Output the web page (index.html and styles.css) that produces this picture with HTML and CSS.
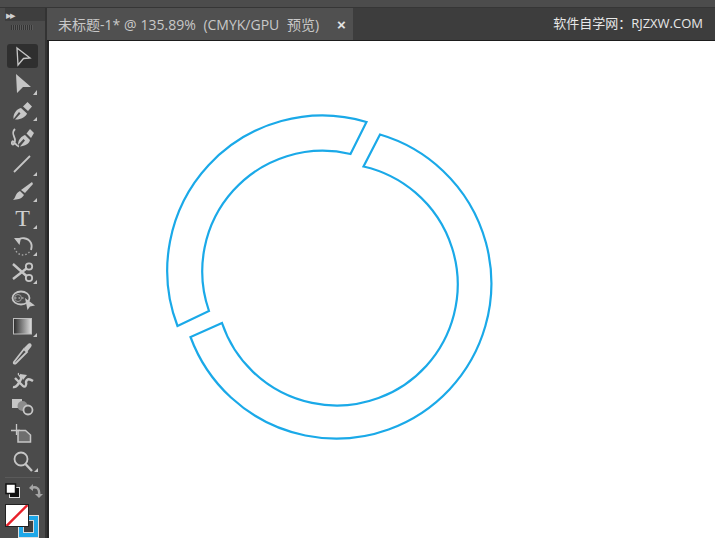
FILE: index.html
```html
<!DOCTYPE html>
<html lang="zh">
<head>
  <meta charset="UTF-8" />
  <title>未标题-1</title>
  <link rel="stylesheet" href="styles.css">
</head>
<body>
  <div class="top-strip"></div>
  <div class="workspace">

    <div class="toolbar">
      <div class="toolbar-head"><span class="collapse">▸▸</span></div>
      <div class="grip"></div>

      <div class="tool active">
        <svg viewBox="0 0 45 27"><path class="line" d="M17 5 L30 15 L23.500 15.500 L18 22 Z"/></svg>
      </div>
      <div class="tool">
        <svg viewBox="0 0 45 27"><path class="solid" d="M16 4 L31 17 L23 17 L17 23 Z"/><path class="solid" d="M37 20 V25 H33 Z"/></svg>
      </div>
      <div class="tool">
        <svg viewBox="0 0 45 27"><path class="solid" d="M13.500 22 C13 16 17 12 21 11 L27 16.500 C26 20 20 23 15 22.500 L20.500 16.500 L19 15 Z"/><path class="solid" d="M23 9.500 L27.500 5 L32 9.500 L28 14 Z"/><path class="solid" d="M37 20 V24 H33 Z"/></svg>
      </div>
      <div class="tool">
        <svg viewBox="0 0 45 27"><path class="solid" d="M18 21 C18 15 22 12 25 11 L30 16 C29 20 25 22 20 22.500 L25 16.500 L23.500 15 Z"/><path class="solid" d="M26.500 9.500 L30 5 L34 9 L31 14 Z"/><path class="line wide" d="M15 5 C10 10 16 13 15 17 C14 22 11 21 12 18 C13 15 16 22 19 22.500"/></svg>
      </div>
      <div class="tool">
        <svg viewBox="0 0 45 27"><path class="line wide" d="M14 21 L30 5"/><path class="solid" d="M37 21 V25 H33 Z"/></svg>
      </div>
      <div class="tool">
        <svg viewBox="0 0 45 27"><path class="solid" d="M32 4 L33 6 L25 15 L21 12 Z"/><path class="solid" d="M20 13 L24 17 C21 22 17 21 13 22 C16 20 15 15 20 13 Z"/><path class="solid" d="M37 20 V24 H33 Z"/></svg>
      </div>
      <div class="tool">
        <svg viewBox="0 0 45 27"><text class="type-glyph" x="22.500" y="21" text-anchor="middle">T</text><path class="solid" d="M37 20 V24 H33 Z"/></svg>
      </div>
      <div class="tool">
        <svg viewBox="0 0 45 27"><path class="line wide" d="M17 9 C20 5 28 5 31 11 C32 13 32 15 31 18"/><path class="solid" d="M14 6 L21 6 L19.500 13 Z"/><path class="dots" d="M14.500 16 C16 21 20 23 23 23 C26 23 29 21 30 19"/><path class="solid" d="M37 20 V24 H33 Z"/></svg>
      </div>
      <div class="tool">
        <svg viewBox="0 0 45 27"><circle class="line wide" cx="29" cy="7.500" r="3.200"/><circle class="line wide" cx="29" cy="19" r="3.200"/><path class="line thick" d="M13 5 L26.500 17 M13 20 L26.500 9.500"/><path class="solid" d="M37 21 V25 H33 Z"/></svg>
      </div>
      <div class="tool">
        <svg viewBox="0 0 45 27"><ellipse class="line wide" cx="21" cy="12" rx="8.500" ry="6.500"/><circle class="line thin" cx="18" cy="12" r="3.500"/><path class="dots" d="M15 12 H25"/><path class="solid" d="M25 12 L35 19.500 L30 20.500 L27.500 24 Z"/></svg>
      </div>
      <div class="tool">
        <svg viewBox="0 0 45 27">
          <defs><linearGradient id="grad"><stop offset="0" stop-color="#2b2b2b"/><stop offset="1" stop-color="#dedede"/></linearGradient></defs>
          <rect x="13.500" y="5.500" width="18" height="15.500" fill="url(#grad)" stroke="#bdbdbd"/>
          <path class="solid" d="M37 20 V24 H33 Z"/>
        </svg>
      </div>
      <div class="tool">
        <svg viewBox="0 0 45 27"><path class="line wide" d="M14 22 C13 24 15 24 16 23 L27 12 L24 9 Z"/><path class="solid" d="M24 8 L28 4 C30 2 33 5 31 7 L27 12 Z"/></svg>
      </div>
      <div class="tool">
        <svg viewBox="0 0 45 27"><path class="line thick" d="M13 20 C17 21 19 16 21 12 C22 9 18 7 19 7 M15 11 L23 19 C25 21 27 18 26 15 C27 11 30 12 33 14"/><path class="solid" d="M20 7 L27 8 L23 13 Z"/></svg>
      </div>
      <div class="tool">
        <svg viewBox="0 0 45 27"><rect class="solid" x="12" y="5" width="10" height="9"/><circle class="mid" cx="22.500" cy="12" r="5"/><circle class="ring" cx="28" cy="16" r="4.500"/></svg>
      </div>
      <div class="tool">
        <svg viewBox="0 0 45 27"><path class="line" d="M11 9.500 H20 M16.500 3 V14"/><path class="filled-doc" d="M18 9.500 H25.500 L30.500 14 V21 H18 Z"/></svg>
      </div>
      <div class="tool">
        <svg viewBox="0 0 45 27"><circle class="line wide" cx="21" cy="11" r="6.500"/><path class="line thick" d="M25.500 16 L32 23"/><path class="solid" d="M38 20 V24 H34 Z"/></svg>
      </div>

      <div class="divider"></div>

      <div class="color-row">
        <svg viewBox="0 0 45 20">
          <rect x="9.500" y="6.500" width="10" height="10" fill="#111" stroke="#ddd"/>
          <rect x="6" y="3" width="9.500" height="9.500" fill="#fff" stroke="#111" stroke-width="1.500"/>
          <path class="swap" d="M31 7 C36 5 40 7 39 14"/>
          <path class="swap-head" d="M29 7 L33 3 V10 Z M35 13 H43 L39 17 Z"/>
        </svg>
      </div>

      <div class="swatches">
        <div class="swatch-stroke"><div class="swatch-hole"></div></div>
        <div class="swatch-fill">
          <svg viewBox="0 0 22 22"><path d="M0 22 L22 0" stroke="#e8202a" stroke-width="2.500"/></svg>
        </div>
      </div>
    </div>

    <div class="gutter"></div>

    <div class="main">
      <div class="tab-bar">
        <div class="tab">
          <span class="tab-title">未标题-1* @ 135.89%  (CMYK/GPU  预览)</span>
          <span class="tab-close">×</span>
        </div>
        <div class="site">软件自学网：RJZXW.COM</div>
      </div>

      <div class="canvas">
        <svg class="artwork" viewBox="49 41 666 497">
          <path d="M366.500 122 A155 155 0 0 0 177.500 326 L209 311 A120.500 120.500 0 0 1 350.500 154 Z"/>
          <path d="M380 134.500 A155.200 155.200 0 1 1 190.500 337 L222 323 A121 121 0 1 0 363.500 166.500 Z"/>
        </svg>
      </div>
    </div>

  </div>
</body>
</html>
```

FILE: styles.css
```css
html, body {
  margin: 0;
  height: 100%;
  overflow: hidden;
}

body {
  width: 715px;
  height: 538px;
  background: #2b2b2b;
  font-family: "Open Sans", "Noto Sans CJK SC", sans-serif;
  display: flex;
  flex-direction: column;
}

.top-strip {
  height: 7px;
  background: #4c4c4c;
  border-bottom: 1px solid #363636;
}

.workspace {
  flex: 1;
  display: flex;
  min-height: 0;
}

/* left tools */
.toolbar {
  width: 45px;
  background: #4b4b4b;
  display: flex;
  flex-direction: column;
  flex-shrink: 0;
}

.toolbar-head {
  height: 13px;
  margin-left: 5px;
  background: #3e3e3e;
  display: flex;
  align-items: center;
  padding-left: 1px;
}

.collapse {
  font-size: 11px;
  line-height: 13px;
  letter-spacing: -2px;
  color: #d0d0d0;
}

.grip {
  width: 22px;
  height: 5px;
  margin: 4px 0 13px 11px;
  background: repeating-linear-gradient(90deg, #343434 0 1px, #5a5a5a 1px 2px);
}

.tool {
  height: 27px;
  position: relative;
}

.tool svg {
  display: block;
  width: 45px;
  height: 27px;
}

.tool.active::before {
  content: "";
  position: absolute;
  left: 7px;
  top: 1px;
  width: 31px;
  height: 24px;
  background: #2f2f2f;
  border-radius: 3px;
}

.tool.active svg {
  position: relative;
}

.solid {
  fill: #c6c6c6;
}

.mid {
  fill: #8c8c8c;
}

.ring {
  fill: #4b4b4b;
  stroke: #c6c6c6;
  stroke-width: 1.800;
}

.line {
  fill: none;
  stroke: #c6c6c6;
  stroke-width: 1.300;
}

.line.thin {
  stroke: #9a9a9a;
  stroke-width: 1;
}

.line.wide {
  stroke-width: 1.800;
}

.line.thick {
  stroke-width: 2.400;
}

.dots {
  fill: none;
  stroke: #a8a8a8;
  stroke-width: 1.300;
  stroke-dasharray: 1.500 2;
}

.filled-doc {
  fill: #6e6e6e;
  stroke: #c6c6c6;
  stroke-width: 1.500;
}

.type-glyph {
  font-family: "Liberation Serif", serif;
  font-size: 24px;
  fill: #cfcfcf;
}

.divider {
  height: 1px;
  margin: 2px 5px 0;
  background: #5a5a5a;
}

.color-row svg {
  display: block;
  width: 45px;
  height: 20px;
  margin-top: 3px;
}

.swap {
  fill: none;
  stroke: #a4a4a4;
  stroke-width: 2.400;
}

.swap-head {
  fill: #a4a4a4;
}

.swatches {
  position: relative;
  flex: 1;
}

.swatch-fill {
  position: absolute;
  left: 6px;
  top: 4px;
  width: 22px;
  height: 21px;
  background: #fff;
  box-shadow: 0 0 0 1px #222;
}

.swatch-fill svg {
  display: block;
  width: 22px;
  height: 21px;
}

.swatch-stroke {
  position: absolute;
  left: 18px;
  top: 14px;
  width: 21px;
  height: 23px;
  box-sizing: border-box;
  background: #1ea7e8;
  border: 1px solid #e0e0e0;
  padding: 4px;
}

.swatch-hole {
  height: 100%;
  background: #3f3f3f;
  border: 1px solid #d8d8d8;
  box-sizing: border-box;
}

.gutter {
  width: 2px;
  background: #333;
  flex-shrink: 0;
}

.main {
  flex: 1;
  display: flex;
  flex-direction: column;
  min-width: 0;
}

.tab-bar {
  height: 32px;
  background: #3d3d3d;
  border-bottom: 1px solid #1d1d1d;
  display: flex;
  justify-content: space-between;
}

.tab {
  width: 306px;
  background: #505050;
  display: flex;
  align-items: center;
  padding-left: 11px;
  box-sizing: border-box;
}

.tab-title {
  font-size: 14px;
  word-spacing: 0.200px;
  color: #c8c8c8;
  white-space: pre;
  width: 279px;
}

.tab-close {
  font-family: "Liberation Sans", sans-serif;
  font-size: 15px;
  font-weight: bold;
  color: #e4e4e4;
}

.site {
  font-size: 13px;
  line-height: 30px;
  padding-right: 12px;
  color: #e8e8e8;
}

.canvas {
  flex: 1;
  background: #fff;
  border-left: 2px solid #262626;
}

.artwork {
  display: block;
  width: 666px;
  height: 497px;
}

.artwork path {
  fill: none;
  stroke: #1aa9e8;
  stroke-width: 2.200;
  stroke-linejoin: miter;
}
```
